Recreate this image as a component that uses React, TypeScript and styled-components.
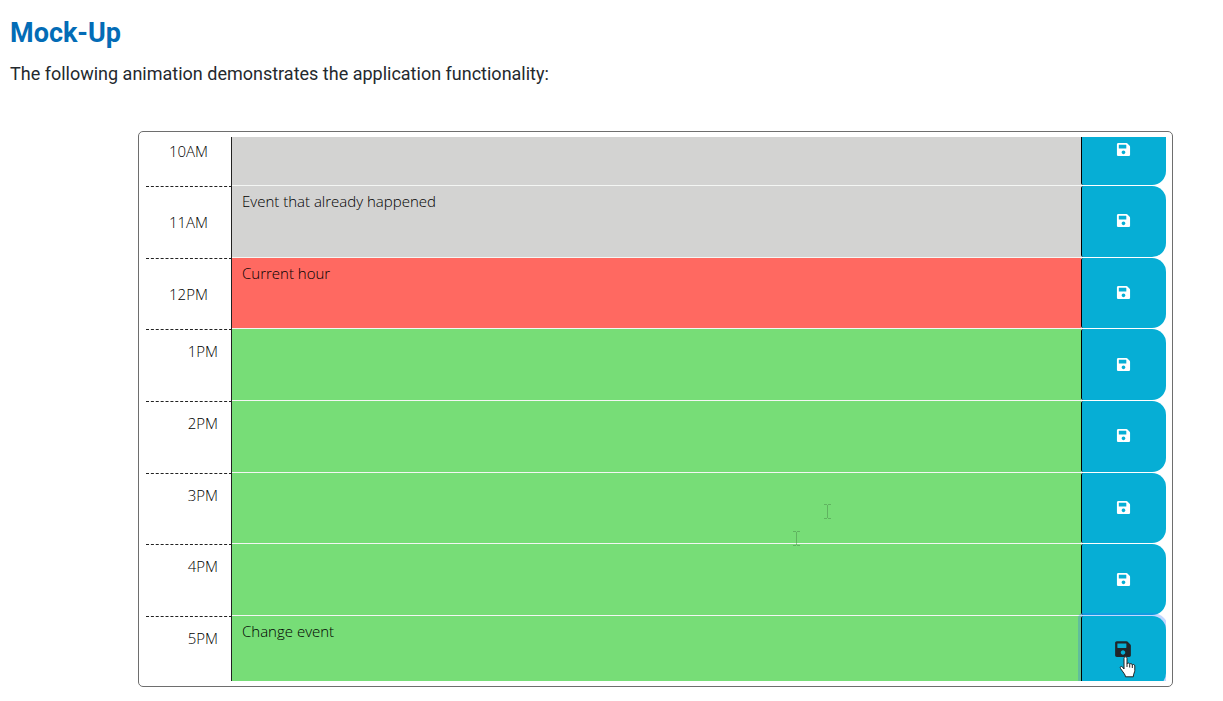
import React from "react";
import styled, { createGlobalStyle } from "styled-components";
import { FaSave } from "react-icons/fa";

const GlobalStyle = createGlobalStyle`
  *, *::before, *::after { box-sizing: border-box; }
  body { margin: 0; background: #ffffff; color: #24292e; font-family: Roboto, sans-serif; }
`;

const Page = styled.main`
  padding: 16px 50px 14px 10px;
`;

const Title = styled.h2`
  margin: 0;
  font-size: 27px;
  line-height: 34px;
  font-weight: 700;
  color: #036cb6;
`;

const Intro = styled.p`
  margin: 12px 0 45px;
  font-size: 18px;
  line-height: 24px;
`;

const Frame = styled.section`
  margin-left: 128px;
  padding: 5px 6px 5px 7px;
  border: 1px solid #6e6e6e;
  border-radius: 5px;
  background: #ffffff;
`;

const Planner = styled.div`
  position: relative;
  display: grid;
  grid-template-rows: 49px repeat(6, 1fr) 65px;
  height: 544px;
  overflow: hidden;
  color: #000000;
  font-family: "Open Sans", sans-serif;
  font-size: 15px;
  font-weight: 300;
  line-height: 20px;
`;

const Row = styled.div<{ $cut?: "top" | "bottom" }>`
  display: grid;
  grid-template-columns: 86px 1fr 85px;
  min-height: ${(p) => (p.$cut ? "72px" : "0")};
  align-self: ${(p) => (p.$cut === "top" ? "end" : p.$cut === "bottom" ? "start" : "stretch")};
`;

const Hour = styled.label<{ $afternoon: boolean }>`
  display: flex;
  align-items: ${(p) => (p.$afternoon ? "flex-start" : "center")};
  justify-content: ${(p) => (p.$afternoon ? "flex-end" : "center")};
  padding: ${(p) => (p.$afternoon ? "11px 13px 0 0" : "0")};
  border-top: 1px dashed #222222;
  border-right: 1px solid #222222;
`;

const fills = { past: "#d3d3d2", present: "#ff6961", future: "#77dd77" };

const Entry = styled.textarea<{ $when: keyof typeof fills }>`
  display: block;
  width: 100%;
  height: 100%;
  margin: 0;
  padding: 5px 10px;
  border: 0;
  border-bottom: 1px solid #f4f6f4;
  border-radius: 0;
  outline: 0;
  resize: none;
  overflow: hidden;
  background: ${(p) => fills[p.$when]};
  color: inherit;
  font: inherit;
`;

const SaveCell = styled.div`
  padding-bottom: 1px;
`;

const SaveButton = styled.button<{ $active?: boolean }>`
  position: relative;
  display: flex;
  align-items: center;
  justify-content: center;
  width: 100%;
  height: 100%;
  padding: ${(p) => (p.$active ? "0 2px 4px 0" : "0 2px 1px 0")};
  border: 0;
  border-left: 1px solid #000000;
  border-radius: 2px 14px 14px 2px;
  background: #06aed5;
  color: ${(p) => (p.$active ? "#212529" : "#ffffff")};
  font-size: ${(p) => (p.$active ? "18px" : "15px")};
  box-shadow: ${(p) => (p.$active ? "0 0 0 3px rgba(38, 110, 255, 0.28)" : "none")};
  cursor: pointer;
`;

const Hand = styled.svg`
  position: absolute;
  left: 37px;
  top: 40px;
  width: 17px;
  height: 22px;
`;

const TextCursor = styled.svg<{ $right: number; $top: number }>`
  position: absolute;
  right: ${(p) => p.$right}px;
  top: ${(p) => p.$top}px;
  width: 7px;
  height: 15px;
  opacity: 0.5;
  pointer-events: none;
`;

type Slot = { hour: string; when: keyof typeof fills; text?: string; cut?: "top" | "bottom" };

const slots: Slot[] = [
  { hour: "10AM", when: "past", cut: "top" },
  { hour: "11AM", when: "past", text: "Event that already happened" },
  { hour: "12PM", when: "present", text: "Current hour" },
  { hour: "1PM", when: "future" },
  { hour: "2PM", when: "future" },
  { hour: "3PM", when: "future" },
  { hour: "4PM", when: "future" },
  { hour: "5PM", when: "future", text: "Change event", cut: "bottom" },
];

function IBeam({ right, top }: { right: number; top: number }) {
  return (
    <TextCursor $right={right} $top={top} viewBox="0 0 7 15" aria-hidden="true">
      <path d="M0 .5h3M4 .5h3M3.5 1v13M0 14.5h3M4 14.5h3" stroke="#4b8a4b" fill="none" />
    </TextCursor>
  );
}

export default function App() {
  return (
    <>
      <GlobalStyle />
      <Page>
        <Title>Mock-Up</Title>
        <Intro>The following animation demonstrates the application functionality:</Intro>
        <Frame>
          <Planner>
            {slots.map(({ hour, when, text, cut }) => {
              const active = hour === "5PM";
              return (
                <Row key={hour} $cut={cut}>
                  <Hour htmlFor={`entry-${hour}`} $afternoon={when === "future"}>
                    {hour}
                  </Hour>
                  <Entry id={`entry-${hour}`} $when={when} defaultValue={text} spellCheck={false} />
                  <SaveCell>
                    <SaveButton type="button" aria-label={`Save ${hour}`} $active={active}>
                      <FaSave />
                      {active && (
                        <Hand viewBox="0 0 17 22" aria-hidden="true">
                          <path
                            d="M5 13V2.5C5 .3 8 .3 8 2.5V8c.3-1.400 2.700-1.200 2.700.4.4-1.200 2.600-1 2.600.7.500-1.100 2.500-.8 2.500.8v4.500c0 2-1.500 3.300-1.500 6.400H6.500c0-2.200-2.500-4.500-5-8.300-1-1.600.8-2.800 2-1.500z"
                            fill="#ffffff"
                            stroke="#222222"
                          />
                          <path d="M8 8v3M10.700 8.500v3M13.300 9v3" stroke="#222222" fill="none" />
                        </Hand>
                      )}
                    </SaveButton>
                  </SaveCell>
                </Row>
              );
            })}
            <IBeam right={335} top={367} />
            <IBeam right={366} top={394} />
          </Planner>
        </Frame>
      </Page>
    </>
  );
}
